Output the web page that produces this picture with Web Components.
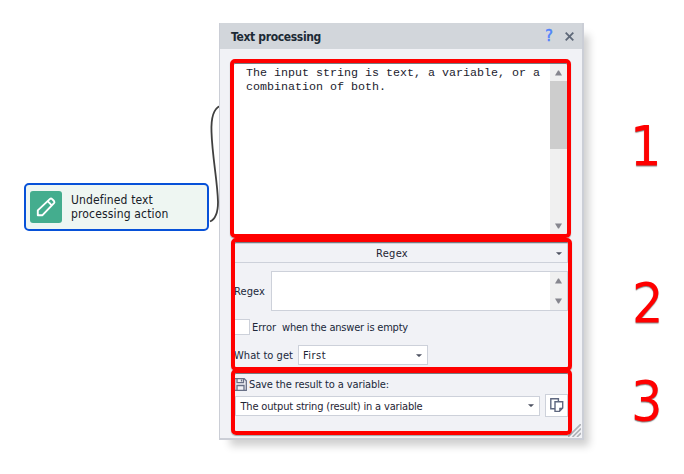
<!DOCTYPE html>
<html lang="en">
<head>
<meta charset="utf-8">
<title>Text processing</title>
<style>
html,body{margin:0;width:684px;height:474px;overflow:hidden;background:#fff}
</style>
</head>
<body>
<action-editor></action-editor>
<script>
const define = (name, css, html, init) => {
  const tpl = document.createElement('template');
  tpl.innerHTML = `<style>*{box-sizing:border-box}${css}</style>${html}`;
  customElements.define(name, class extends HTMLElement {
    connectedCallback() {
      if (this.shadowRoot) return;
      this.attachShadow({mode: 'open'}).append(tpl.content.cloneNode(true));
      if (init) init(this, this.shadowRoot);
    }
  });
};

// One line of text whose tracking is adjusted so that it spans the given width.
define('ui-label', `:host{display:block;white-space:pre;flex:none}span{display:inline-block}`,
  `<span><slot></slot></span>`, (el, root) => {
    const span = root.querySelector('span');
    const want = +el.getAttribute('width');
    if (want) {
      const have = span.getBoundingClientRect().width;
      span.style.letterSpacing = ((want - have) / el.textContent.length) + 'px';
      el.style.width = want + 'px';
    }
  });

define('ui-arrow', `:host{display:block;flex:none;width:7px;height:6px}
  svg{display:block}:host([small]){width:6px;height:3px}:host([up]) svg{transform:rotate(180deg)}`,
  `<svg width="100%" height="100%" viewBox="0 0 7 6" preserveAspectRatio="none"><path d="M0 .5H7L4 5.5H3Z" fill="currentColor"/></svg>`);

define('scroll-bar', `:host{display:flex;flex-direction:column;align-items:center;justify-content:space-between;width:17px;flex:none;background:#f0f0f0;color:#86868e;padding:6px 0}
  i{display:none;width:17px;height:68px;background:#cdcdcd;margin-bottom:auto;margin-top:5px}
  :host([thumb]) i{display:block}`,
  `<ui-arrow up></ui-arrow><i></i><ui-arrow></ui-arrow>`);

define('code-area', `:host{display:flex;height:171px;background:#fff;margin-right:1px}
  div{flex:1;padding:2px 0 0 12px;font:11.67px/14px "Liberation Mono",monospace;color:#22222e}`,
  `<div><slot></slot></div><scroll-bar thumb></scroll-bar>`);

define('select-box', `:host{display:flex;align-items:center;height:20px;border:1px solid #cdd1da;background:#fff;color:#1e2433;padding:0 5px 0 4px;justify-content:space-between}
  :host([flat]){background:transparent}
  ui-arrow{color:#4c5160}`,
  `<slot></slot><ui-arrow small></ui-arrow>`);

define('copy-button', `:host{display:block;width:23px;height:23px;border:1px solid #cdd1da;background:#fff;flex:none}svg{display:block;margin:3px 0 0 4px}`,
  `<svg width="14" height="15" viewBox="0 0 14 15" fill="#fff" stroke="#5f6880" stroke-width="1.4">
  <path d="M.8 .8H8.4V10.7H.8Z"/><path d="M5 3.7H12.7V10L9.5 13.4H5Z"/><path d="M9.5 13.4V10H12.7Z" fill="#5f6880" stroke-width=".6"/></svg>`);

define('save-icon', `:host{display:block;width:13px;height:13px;flex:none}svg{display:block}`,
  `<svg width="13" height="13" viewBox="0 0 13 13" fill="none" stroke="#687086" stroke-width="1.3"><path d="M.7 .7H10.2L12.3 2.8V12.3H.7Z"/><path d="M3 .8V4.6H9.5V.8M7.5 1.5V3.4"/><path d="M3 12V7.5H10V12"/></svg>`);

define('action-node', `:host{display:flex;width:185px;height:48px;border:2px solid #0751d8;border-radius:5px;background:#eef6f2;padding:6px 4px;gap:9px}
  .badge{width:32px;height:32px;border-radius:3px;background:#44ad8e}
  .text{padding-top:2px;font:12px/14px "DejaVu Sans Condensed","DejaVu Sans",sans-serif;font-stretch:condensed;color:#172027}
  svg{display:block}`,
  `<div class="badge"><svg width="32" height="32" viewBox="0 0 32 32" fill="none" stroke="#fff" stroke-width="1.9" stroke-linejoin="round"><path d="M7.8 24.2V19.4L20 7.9Q21.1 7.1 22.2 8.1L24 10Q24.9 11.1 24 12.1L12.5 24.2Z"/><path d="M17.6 10.2L21.8 14.4"/></svg></div><div class="text"><slot></slot></div>`);

define('dialog-title', `:host{display:flex;height:26px;align-items:center;background:#d2d6db;padding:0 8px 0 11px;font:bold 12px/16px "DejaVu Sans Condensed","DejaVu Sans",sans-serif;font-stretch:condensed;color:#1c2a35}
  .help{margin-left:auto;font:16px/18px "DejaVu Sans Condensed","DejaVu Sans",sans-serif;font-stretch:condensed;-webkit-text-stroke:.5px #4f82fb;color:#4f82fb;margin-right:12px}
  svg{display:block}`,
  `<slot></slot><span class="help">?</span><svg width="9" height="9" viewBox="0 0 9 9" stroke="#5e6878" stroke-width="1.8"><path d="M.7 .7L8.3 8.3M8.3 .7L.7 8.3"/></svg>`);

define('processing-dialog', `:host{display:block;width:365px;height:417px;background:#f1f2f6;border:1px solid #cbced6;border-right-width:2px;border-bottom-width:2px;border-top:0;
    box-shadow:8px 9px 8px -3px rgba(0,0,0,.19);font:11px/14px "DejaVu Sans Condensed","DejaVu Sans",sans-serif;font-stretch:condensed;color:#20283a;position:relative}
  .body{padding:15px 14px 0 14px;display:flex;flex-direction:column}
  .row{display:flex;align-items:center}
  .row ui-label,select-box ui-label,dialog-title ui-label{padding-top:2px}
  .field{height:40px;flex:1;display:flex;justify-content:flex-end;background:#fff;border:1px solid #cdd1da}
  .check{width:16px;height:16px;background:#fff;border:1px solid #cdd1da}
  .grip{position:absolute;right:1px;bottom:1px}`,
  `<dialog-title><ui-label width="90">Text processing</ui-label></dialog-title>
  <div class="body">
    <code-area><ui-label width="294">The input string is text, a variable, or a</ui-label><ui-label width="140">combination of both.</ui-label></code-area>
    <select-box flat style="margin-top:8px"><ui-label width="32" style="margin-left:137px">Regex</ui-label></select-box>
    <div class="row" style="margin-top:8px"><ui-label width="31" style="margin-right:6px">Regex</ui-label><div class="field"><scroll-bar></scroll-bar></div></div>
    <div class="row" style="margin-top:8px"><span class="check"></span><ui-label width="24" style="margin-left:2px">Error</ui-label><ui-label width="126" style="margin-left:6px">when the answer is empty</ui-label></div>
    <div class="row" style="margin-top:10px"><ui-label width="59" style="margin-right:5px">What to get</ui-label><select-box style="width:130px"><ui-label width="23">First</ui-label></select-box></div>
    <div class="row" style="margin-top:11px"><save-icon></save-icon><ui-label width="140" style="margin-left:2px">Save the result to a variable:</ui-label></div>
    <div class="row" style="margin-top:2px;gap:5px"><select-box style="width:306px;padding-left:5px;margin-left:0.5px"><ui-label width="182">The output string (result) in a variable</ui-label></select-box><copy-button></copy-button></div>
  </div>
  <svg class="grip" width="13" height="13" viewBox="0 0 13 13" stroke="#afb2b7" stroke-width="1.7"><path d="M0 13L13 0M4.5 13L13 4.5M9 13L13 9"/></svg>`);

// Annotation frame laid over a part of the dialog.
define('mark-frame', `:host{display:block;position:absolute;border:4px solid #f00;border-radius:5px;box-shadow:inset 0 1px 0 #777b80,0 1px 1px rgba(60,70,75,.45)}`, ``);
define('mark-number', `:host{display:block;position:absolute;font:55px/56px "DejaVu Sans Condensed","DejaVu Sans",sans-serif;font-stretch:condensed;color:#f00;text-shadow:0 1px 1px rgba(70,70,70,.65)}`, `<slot></slot>`);

define('action-editor', `:host{display:block;position:relative;width:684px;height:474px;background:#fff}
  action-node{position:absolute;left:24px;top:183px}
  processing-dialog{position:absolute;left:219px;top:23px}
  .link{position:absolute;left:200px;top:98px}`,
  `<action-node><ui-label width="82">Undefined text</ui-label><ui-label width="97.5">processing action</ui-label></action-node>
  <svg class="link" width="24" height="130" viewBox="200 98 24 130" fill="none" stroke="#404040" stroke-width="1.8"><path d="M220 106C213 109 211 119 211.5 132C212.3 157 217.5 181 218 202Q218 218 210 221.5"/></svg>
  <processing-dialog></processing-dialog>
  <mark-frame style="left:230px;top:59px;width:341px;height:179px"></mark-frame>
  <mark-frame style="left:231px;top:238px;width:341px;height:133px"></mark-frame>
  <mark-frame style="left:231px;top:369px;width:341px;height:66px"></mark-frame>
  <mark-number style="left:630px;top:118px">1</mark-number>
  <mark-number style="left:632px;top:275px">2</mark-number>
  <mark-number style="left:631px;top:373px">3</mark-number>`);
</script>
</body>
</html>
